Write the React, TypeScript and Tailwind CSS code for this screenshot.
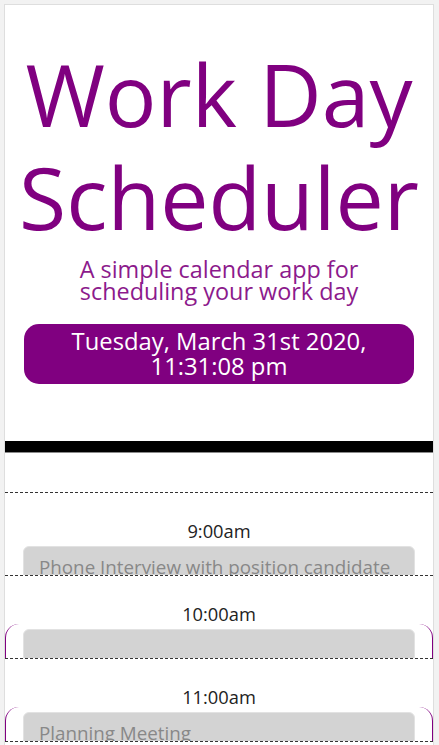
const hours = [
  { label: "9:00am", text: "Phone Interview with position candidate", marked: false },
  { label: "10:00am", text: "", marked: true },
  { label: "11:00am", text: "Planning Meeting", marked: true },
  { label: "12:00pm", text: "", marked: true },
  { label: "1:00pm", text: "", marked: true },
  { label: "2:00pm", text: "", marked: true },
  { label: "3:00pm", text: "", marked: true },
  { label: "4:00pm", text: "", marked: true },
  { label: "5:00pm", text: "", marked: true },
];

export default function App() {
  return (
    <div className="min-h-screen bg-[#f2f2f2] pl-[4px] pr-[5px] pt-[4px] font-['Open_Sans',sans-serif]">
      <div className="border border-[#dedede] bg-white pt-[37px]">
        <header className="text-center">
          <h1 className="text-[86px] leading-[103px] text-[#800080]">
            Work Day Scheduler
          </h1>
          <p className="mt-[11px] text-[23.4px] leading-[21.5px] text-[#8c1a8c]">
            A simple calendar app for
            <br />
            scheduling your work day
          </p>
          <div className="mx-[19px] mt-[22px] rounded-[15px] bg-[#800080] px-2 pb-[5px] pt-[5px] text-[23.8px] leading-[25px] text-white">
            Tuesday, March 31st 2020,
            <br />
            11:31:08 pm
          </div>
        </header>

        <div className="mt-[57px] h-[12px] border-b border-[#8a8a8a] bg-black" />

        <section className="pt-[39px]">
          {hours.map((h) => (
            <div
              key={h.label}
              className="h-[83px] overflow-hidden border-t border-dashed border-[#333] pt-[27px]"
            >
              <div className="text-center text-[18.3px] leading-[21px] text-[#222]">
                {h.label}
              </div>
              <div
                className={
                  h.marked
                    ? "rounded-[14px] border-x border-[#800080] px-[17px] pt-[5px]"
                    : "rounded-[14px] border-x border-transparent px-[17px] pt-[5px]"
                }
              >
                <textarea
                  readOnly
                  defaultValue={h.text}
                  className="block h-[80px] w-full resize-none rounded-[6px] border border-[#e2e2e2] bg-[#d3d3d3] pl-[15px] pr-[8px] pt-[5px] text-[18.8px] leading-[30px] text-[#888] outline-none"
                />
              </div>
            </div>
          ))}
        </section>
      </div>
    </div>
  );
}
